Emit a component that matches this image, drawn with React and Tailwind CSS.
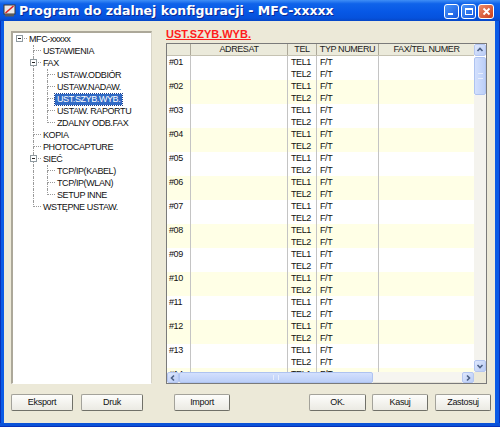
import React from "react";

const tree = [
  { t: "MFC-xxxxx", lv: 0 },
  { t: "USTAWIENIA", lv: 1 },
  { t: "FAX", lv: 1, box: true },
  { t: "USTAW.ODBIÓR", lv: 2 },
  { t: "USTAW.NADAW.", lv: 2 },
  { t: "UST.SZYB.WYB.", lv: 2, sel: true },
  { t: "USTAW. RAPORTU", lv: 2 },
  { t: "ZDALNY ODB.FAX", lv: 2, last: true },
  { t: "KOPIA", lv: 1 },
  { t: "PHOTOCAPTURE", lv: 1 },
  { t: "SIEĆ", lv: 1, box: true },
  { t: "TCP/IP(KABEL)", lv: 2 },
  { t: "TCP/IP(WLAN)", lv: 2 },
  { t: "SETUP INNE", lv: 2, last: true },
  { t: "WSTĘPNE USTAW.", lv: 1, last: true },
];

function Cell({ up, down, right, box }) {
  return (
    <div className="relative grid h-[12px] w-[14px] shrink-0 grid-cols-[7px_7px] grid-rows-[6px_6px]">
      <div className={up ? "border-r border-dotted border-[#9a9a9a]" : ""} />
      <div className={right ? "border-b border-dotted border-[#9a9a9a]" : ""} />
      <div className={down ? "border-r border-dotted border-[#9a9a9a]" : ""} />
      <div />
      {box && (
        <div className="absolute left-[3px] top-[2px] flex h-[7px] w-[7px] items-center justify-center border border-[#8f9aa0] bg-white">
          <div className="h-px w-[3px] bg-[#222]" />
        </div>
      )}
    </div>
  );
}

function Tree() {
  return (
    <div className="w-[141px] shrink-0 border-t-2 border-l-2 border-b border-r border-t-[#aca899] border-l-[#aca899] border-b-white border-r-[#d8d5c8] bg-white pt-0">
      {tree.map((n, i) => (
        <div key={i} className="flex h-[12px] items-center">
          {n.lv === 0 && <Cell right box />}
          {n.lv >= 1 && <div className="h-[12px] w-[14px] shrink-0" />}
          {n.lv === 1 && <Cell up down={!n.last} right box={n.box} />}
          {n.lv === 2 && <Cell up down />}
          {n.lv === 2 && <Cell up down={!n.last} right />}
          <span
            className={
              n.sel
                ? "h-[11px] whitespace-nowrap bg-[#316ac5] px-[2px] text-[9px] leading-[11px] tracking-[-0.4px] text-white outline outline-1 outline-dotted outline-[#1b3f8a]"
                : "h-[11px] whitespace-nowrap px-[2px] text-[9px] leading-[11px] tracking-[-0.4px] text-[#111]"
            }
          >
            {n.t}
          </span>
        </div>
      ))}
    </div>
  );
}

function Arrow({ dir }) {
  const d = {
    up: "M1.5 5 L4 2.5 L6.5 5",
    down: "M1.5 3 L4 5.5 L6.5 3",
    left: "M5 1.5 L2.5 4 L5 6.5",
    right: "M3 1.5 L5.5 4 L3 6.5",
  }[dir];
  return (
    <svg width="8" height="8" viewBox="0 0 8 8">
      <path d={d} stroke="#4d6185" strokeWidth="1.6" fill="none" />
    </svg>
  );
}

function SBtn({ dir, cls }) {
  return (
    <div className={"flex shrink-0 items-center justify-center rounded-[2px] border border-[#b4c6f0] bg-gradient-to-br from-[#dfe8fd] to-[#b9ccf6] " + cls}>
      <Arrow dir={dir} />
    </div>
  );
}

const cols = "grid grid-cols-[24px_97px_29px_62px_95px]";
const recs = Array.from({ length: 14 }, (_, i) => "#" + String(i + 1).padStart(2, "0"));

function Grid() {
  return (
    <div className="flex h-[341px] shrink-0 border border-[#7a7a7a] bg-white">
      <div className="flex w-[307px] flex-col">
        <div className={cols + " h-[12px] shrink-0 border-b border-[#c5c2b2] bg-[#ebeadb] text-[9px] leading-[11px] tracking-[-0.4px] text-[#222]"}>
          <div className="border-r border-[#aca899]" />
          <div className="border-r border-[#aca899] text-center">ADRESAT</div>
          <div className="border-r border-[#aca899] text-center">TEL</div>
          <div className="border-r border-[#aca899] text-center">TYP NUMERU</div>
          <div className="text-center">FAX/TEL NUMER</div>
        </div>
        <div className="h-[316px] shrink-0 overflow-hidden text-[9px] leading-[12px] tracking-[-0.4px] text-[#111]">
          {recs.map((r, i) => (
            <div key={r} className={cols + " h-[24px] " + (i % 2 === 1 ? "bg-[#ffffe6]" : "bg-white")}>
              <div className="border-r border-[#c4c4c4] pl-[2px]">{r}</div>
              <div className="border-r border-[#c4c4c4]" />
              <div className="border-r border-[#c4c4c4] pl-[3px]">
                <div>TEL1</div>
                <div>TEL2</div>
              </div>
              <div className="border-r border-[#c4c4c4] pl-[3px]">
                <div>F/T</div>
                <div>F/T</div>
              </div>
              <div />
            </div>
          ))}
        </div>
        <div className="flex h-[11px] shrink-0 bg-[#f6f5f0]">
          <SBtn dir="left" cls="w-[12px]" />
          <div className="flex w-[194px] shrink-0 items-center justify-center rounded-[2px] border border-[#aec3f0] bg-gradient-to-b from-[#d3e0fd] to-[#bccff8]">
            <div className="h-[5px] w-[6px] border-x border-[#e8eefc]" />
          </div>
          <div className="flex-1 border-b border-[#e4e2d8]" />
          <SBtn dir="right" cls="w-[12px]" />
        </div>
      </div>
      <div className="flex w-[12px] flex-col">
        <SBtn dir="up" cls="h-[12px]" />
        <div className="mt-[1px] flex h-[38px] shrink-0 items-center justify-center rounded-[2px] border border-[#aec3f0] bg-gradient-to-r from-[#d3e0fd] to-[#bccff8]">
          <div className="h-[6px] w-[5px] border-y border-[#e8eefc]" />
        </div>
        <div className="min-h-0 flex-1 bg-[#f4f3ee]" />
        <SBtn dir="down" cls="h-[12px]" />
        <div className="h-[11px] shrink-0 bg-[#ece9d8]" />
      </div>
    </div>
  );
}

function Btn({ children, cls }) {
  return (
    <div
      className={
        "flex h-[17px] shrink-0 items-center justify-center rounded-[2px] border border-[#a3a29a] border-b-[#707068] border-r-[#707068] bg-gradient-to-b from-[#fdfdfb] to-[#ebeae3] text-[9px] tracking-[-0.3px] text-[#111] " +
        cls
      }
    >
      {children}
    </div>
  );
}

export default function App() {
  return (
    <div className="flex h-[427px] w-[500px] flex-col overflow-hidden bg-[#0a54e0] font-['Liberation_Sans',Arial,sans-serif]">
      <div className="flex h-[21px] shrink-0 items-center bg-[linear-gradient(to_bottom,#3f8ef6_0%,#0f63ea_18%,#0758e6_55%,#0552dd_85%,#0646c6_100%)] pl-[3px] pr-[6px]">
        <svg width="13" height="13" viewBox="0 0 13 13" className="shrink-0">
          <rect x="1" y="1" width="11" height="9" fill="#e8e8e8" stroke="#3a3a3a" strokeWidth="1" />
          <rect x="2" y="10" width="9" height="2.5" fill="#5a5a5a" />
          <path d="M2.5 9 L10.5 2" stroke="#e02020" strokeWidth="1.6" />
        </svg>
        <div className="ml-[3px] whitespace-nowrap font-['DejaVu_Sans',sans-serif] text-[12.5px] font-bold leading-[15px] text-white [text-shadow:1px_1px_0_#0c2a94]">
          Program do zdalnej konfiguracji - MFC-xxxxx
        </div>
        <div className="flex-1" />
        <div className="flex gap-[2px] pt-[1px]">
          <div className="flex h-[15px] w-[15px] items-end rounded-[3px] border border-white bg-gradient-to-br from-[#4a94f8] to-[#1556e0] pb-[3px] pl-[3px]">
            <div className="h-[2px] w-[5px] bg-white" />
          </div>
          <div className="flex h-[15px] w-[15px] items-center justify-center rounded-[3px] border border-white bg-gradient-to-br from-[#4a94f8] to-[#1556e0]">
            <div className="h-[7px] w-[8px] border border-t-2 border-white" />
          </div>
          <div className="flex h-[15px] w-[16px] items-center justify-center rounded-[3px] border border-white bg-gradient-to-br from-[#ec8a68] to-[#c93c1a]">
            <svg width="9" height="9" viewBox="0 0 9 9">
              <path d="M1.5 1.5 L7.5 7.5 M7.5 1.5 L1.5 7.5" stroke="white" strokeWidth="1.8" />
            </svg>
          </div>
        </div>
      </div>
      <div className="flex min-h-0 flex-1">
        <div className="w-[4px] shrink-0 border-l border-[#0831b8] bg-[#0b5be6]" />
        <div className="flex w-[491px] shrink-0 flex-col bg-[#ece9d8] pt-[10px]">
          <div className="flex h-[353px] shrink-0 pl-[7px]">
            <Tree />
            <div className="ml-[14px] flex w-[321px] flex-col">
              <div className="-mt-[2px] h-[14px] shrink-0 text-[11px] font-bold leading-[11px] text-[#ff1c1c] underline">
                UST.SZYB.WYB.
              </div>
              <Grid />
            </div>
          </div>
          <div className="mt-[10px] flex h-[17px] shrink-0">
            <Btn cls="ml-[7px] w-[62px]">Eksport</Btn>
            <Btn cls="ml-[8px] w-[62px]">Druk</Btn>
            <Btn cls="ml-[31px] w-[56px]">Import</Btn>
            <div className="flex-1" />
            <Btn cls="w-[57px]">OK.</Btn>
            <Btn cls="ml-[6px] w-[56px]">Kasuj</Btn>
            <Btn cls="ml-[7px] mr-[4px] w-[56px]">Zastosuj</Btn>
          </div>
        </div>
        <div className="flex-1 border-r border-[#0831b8] bg-[#0b5be6]" />
      </div>
      <div className="h-[4px] shrink-0 border-b border-[#0831b8] bg-[#0a52d8]" />
    </div>
  );
}
